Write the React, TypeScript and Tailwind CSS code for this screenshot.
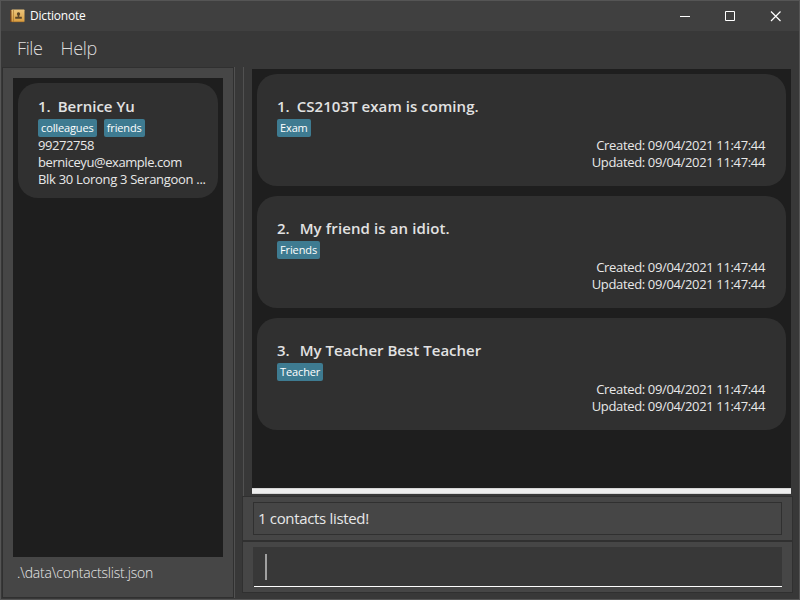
const notes = [
  { id: 1, title: "CS2103T exam is coming.", tag: "Exam", track: "tracking-[0.06px]", gap: "gap-[7px]" },
  { id: 2, title: "My friend is an idiot.", tag: "Friends", track: "tracking-[0.11px]", gap: "gap-[10px]" },
  { id: 3, title: "My Teacher Best Teacher", tag: "Teacher", track: "tracking-[0.02px]", gap: "gap-[10px]" },
];
const stamp = "09/04/2021 11:47:44";

function Tag({ children }: { children: string }) {
  return (
    <span className="flex h-[18px] items-center rounded-[2px] bg-[#3e7b91] px-[3px] text-[11px] leading-[18px] tracking-[-0.12px] text-white">
      {children}
    </span>
  );
}

function BookIcon() {
  return (
    <svg width="15" height="14" viewBox="0 0 15 14" className="block">
      <defs>
        <linearGradient id="cover" x1="0" y1="0" x2="0" y2="1">
          <stop offset="0" stopColor="#edc67c" />
          <stop offset="1" stopColor="#d99d3f" />
        </linearGradient>
      </defs>
      <rect x="0" y="1" width="3" height="12" fill="#70431f" />
      <rect x="1.5" y="0.5" width="13" height="12.5" rx="0.7" fill="url(#cover)" />
      <path d="M3.500 1v12M2 12.700h12" stroke="#a87531" strokeWidth="0.7" />
      <path d="M8.500 3.200a1.600 1.600 0 0 1 1.200 2.700L9.300 7v.8h2.500v1.900H5.200V7.800h2.500V7l-.4-1.100A1.600 1.600 0 0 1 8.500 3.200z" fill="#5c4528" />
    </svg>
  );
}

export default function App() {
  return (
    <div className="flex h-[600px] w-[800px] flex-col overflow-hidden border border-[#555555] bg-[#383838] font-['Open_Sans',sans-serif] text-[#e8e8e8]">
      <header className="flex h-[30px] shrink-0 items-center bg-[#404040] pl-[9px]">
        <BookIcon />
        <span className="ml-[5px] text-[12px] leading-[16px] tracking-[-0.2px] text-white">Dictionote</span>
        <svg width="102" height="11" viewBox="0 0 102 11" className="mr-[17px] ml-auto block" fill="none" stroke="#fff">
          <path d="M0 5.500h10M45.500.5h9v9h-9z" />
          <path d="M91 .5l9.500 9.500M100.500.5L91 10" strokeWidth="1.200" />
        </svg>
      </header>
      <nav className="flex h-[36px] shrink-0 items-center gap-[18px] pb-[2px] pl-4 text-[18px] leading-[24px] font-light text-[#dddddd]">
        <span className="tracking-[-0.4px]">File</span>
        <span className="tracking-[-0.3px]">Help</span>
      </nav>

      <div className="flex h-[531px] shrink-0">
        <aside className="ml-px flex w-[232px] flex-col border border-[#303030] bg-[#464646] px-[10px] pt-[10px]">
          <div className="h-[479px] w-[210px] shrink-0 bg-[#1e1e1e] p-[5px]">
            <article className="h-[115px] rounded-[20px] bg-[#303030] pt-[12px] pl-5 text-[13px] leading-[17px]">
              <h2 className="flex h-[24px] items-start gap-[7px] text-[15px] leading-[22px] font-semibold text-[#e2e2e2]">
                <span>1.</span>
                <span>Bernice Yu</span>
              </h2>
              <div className="flex gap-[7px]">
                <Tag>colleagues</Tag>
                <Tag>friends</Tag>
              </div>
              <p className="tracking-[-0.45px]">99272758</p>
              <p className="tracking-[-0.43px]">berniceyu@example.com</p>
              <p className="tracking-[-0.3px] whitespace-nowrap">Blk 30 Lorong 3 Serangoon ...</p>
            </article>
          </div>
          <div className="pt-[6px] pl-1 text-[14px] leading-[20px] font-light tracking-[-0.2px]">.\data\contactslist.json</div>
        </aside>
        <div className="w-[9px] border-l border-[#515151]" />

        <main className="flex w-[550px] flex-col">
          <div className="h-[429px] border-l border-[#515151] pt-[2px] pl-[8px]">
            <section className="flex h-[419px] w-[539px] flex-col gap-[10px] bg-[#1e1e1e] p-[5px]">
              {notes.map((note) => (
                <article key={note.id} className="h-[112px] shrink-0 rounded-[20px] bg-[#303030] px-5 pt-[20px]">
                  <h2 className={`flex h-[25px] items-start text-[15px] leading-[24px] font-semibold text-[#e2e2e2] ${note.gap}`}>
                    <span>{note.id}.</span>
                    <span className={note.track}>{note.title}</span>
                  </h2>
                  <div className="flex">
                    <Tag>{note.tag}</Tag>
                  </div>
                  <div className="pr-px text-right text-[13px] leading-[17px] tracking-[-0.35px]">
                    <p>Created: {stamp}</p>
                    <p>Updated: {stamp}</p>
                  </div>
                </article>
              ))}
            </section>
            <div className="h-[6px] w-[539px] border-y border-[#d5d5d5] bg-[#eeeeee]" />
          </div>
          <section className="-ml-px h-[45px] w-[551px] shrink-0 border border-[#303030] bg-[#464646] px-[10px] pt-[5px]">
            <div className="h-[33px] w-[529px] border border-[#303030] pl-[4px] text-[15px] leading-[31px] tracking-[-0.33px]">1 contacts listed!</div>
          </section>
          <section className="-ml-px h-[52px] w-[551px] shrink-0 border border-[#303030] bg-[#464646] px-[10px] pt-[5px]">
            <div className="h-[40px] w-[529px] bg-[#383838] pt-[7px] pl-[12px]">
              <div className="h-[26px] w-[2px] bg-[#a0a0a0]" />
              <div className="mt-[6px] -ml-[11px] h-px bg-white" />
            </div>
          </section>
        </main>
      </div>
    </div>
  );
}
